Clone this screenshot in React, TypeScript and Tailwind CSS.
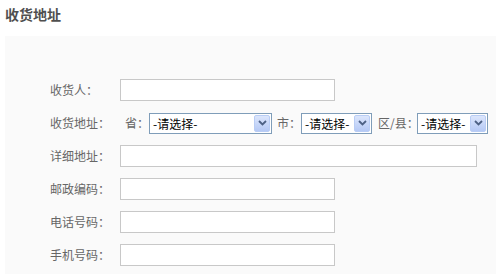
const font = { fontFamily: '"Noto Sans CJK SC", "Liberation Sans", sans-serif' };

const Field = ({ label, wide }: { label: string; wide?: boolean }) => (
  <div className="flex h-[22px] items-center">
    <span className="w-[70px] shrink-0 text-[12px] leading-[22px] text-[#666]">{label}</span>
    <input
      type="text"
      className={`h-[22px] ${wide ? "w-[357px]" : "w-[215px]"} border border-[#c8c8c8] bg-white outline-none`}
    />
  </div>
);

const Select = ({ width }: { width: string }) => (
  <div className={`flex h-[21px] ${width} items-center border border-[#7f9db9] bg-white`}>
    <span className="flex-1 pl-[3px] text-[12px] leading-[19px] text-black">-请选择-</span>
    <span className="mr-px flex h-[17px] w-[16px] items-center justify-center rounded-[2px] border border-[#b9cdf5] bg-gradient-to-b from-[#dce6fc] to-[#b5c9f5]">
      <svg width="9" height="6" viewBox="0 0 9 6">
        <path d="M1 1 L4.5 4.5 L8 1" fill="none" stroke="#4d6185" strokeWidth="1.8" />
      </svg>
    </span>
  </div>
);

export default function App() {
  return (
    <div className="w-[496px] bg-white" style={font}>
      <div className="pl-[5px] pt-[5px] text-[14px] font-bold leading-[18px] text-[#4f4f4f]">收货地址</div>
      <div className="ml-[5px] mt-[13px] flex flex-col gap-[11px] bg-[#fafafa] pb-[12px] pl-[45px] pt-[43px]">
        <Field label="收货人：" />
        <div className="flex h-[22px] items-center">
          <span className="w-[70px] shrink-0 text-[12px] leading-[22px] text-[#666]">收货地址：</span>
          <span className="ml-[5px] w-[24px] text-[12px] text-[#666]">省：</span>
          <Select width="w-[123px]" />
          <span className="ml-[5px] w-[24px] text-[12px] text-[#666]">市：</span>
          <Select width="w-[71px]" />
          <span className="ml-[6px] w-[39px] whitespace-nowrap text-[12px] text-[#666]">区/县：</span>
          <Select width="w-[71px]" />
        </div>
        <Field label="详细地址：" wide />
        <Field label="邮政编码：" />
        <Field label="电话号码：" />
        <Field label="手机号码：" />
      </div>
    </div>
  );
}
